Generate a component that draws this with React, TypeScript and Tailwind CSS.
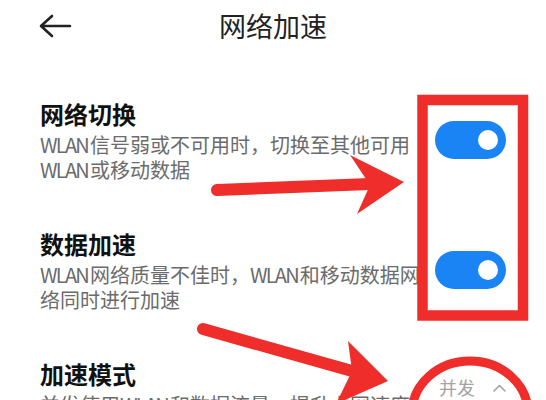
import React from "react";

function Toggle() {
  return (
    <div className="w-[71px] h-[38px] rounded-full bg-[#1a84f4] flex items-center justify-end pr-[8px] shrink-0">
      <div className="w-[20px] h-[20px] rounded-full bg-white" />
    </div>
  );
}

function Line({ text }: { text: string }) {
  const parts = text.split(/(WLAN)/);
  return (
    <div className="whitespace-nowrap">
      {parts.map((p, i) =>
        p === "WLAN" ? (
          <span key={i} className="tracking-[-1.8px] mr-[2px]">
            {p}
          </span>
        ) : (
          <span key={i}>{p}</span>
        )
      )}
    </div>
  );
}

function Item({
  title,
  lines,
  right,
}: {
  title: string;
  lines: string[];
  right: React.ReactNode;
}) {
  return (
    <div className="flex items-center justify-between">
      <div className="flex flex-col">
        <div className="text-[24px] leading-[32px] font-semibold text-[#111111] whitespace-nowrap">{title}</div>
        <div className="mt-[2px] text-[20px] leading-[25px] text-[#6b6b6b]">
          {lines.map((l, i) => (
            <Line key={i} text={l} />
          ))}
        </div>
      </div>
      {right}
    </div>
  );
}

export default function App() {
  return (
    <div className="relative w-[546px] h-[400px] overflow-hidden bg-white font-['Noto_Sans_CJK_SC','Noto_Sans',sans-serif]">
      <header className="h-[52px] relative flex items-center justify-center">
        <svg className="absolute left-[39px] top-[14px]" width="34" height="24" viewBox="0 0 34 24" fill="none">
          <path d="M2 12 H31 M13 2 L2 12 L13 22" stroke="#222" strokeWidth="2.6" strokeLinecap="round" strokeLinejoin="round" />
        </svg>
        <h1 className="text-[27px] leading-[32px] text-[#222222]">网络加速</h1>
      </header>

      <div className="flex flex-col gap-[46px] pt-[46px] pl-[40px] pr-[40px]">
        <Item
          title="网络切换"
          lines={["WLAN信号弱或不可用时，切换至其他可用", "WLAN或移动数据"]}
          right={<Toggle />}
        />
        <Item
          title="数据加速"
          lines={["WLAN网络质量不佳时，WLAN和移动数据网", "络同时进行加速"]}
          right={<Toggle />}
        />
        <Item
          title="加速模式"
          lines={["并发使用WLAN和数据流量，提升上网速度", ""]}
          right={
            <div className="flex items-center gap-[18px] text-[18px] text-[#a3a3a3] shrink-0">
              <span>并发</span>
              <svg width="13" height="8" viewBox="0 0 13 8" fill="none">
                <path d="M1 7 L6.5 1.5 L12 7" stroke="#a3a3a3" strokeWidth="1.6" strokeLinecap="round" strokeLinejoin="round" />
              </svg>
            </div>
          }
        />
      </div>

      <svg className="absolute inset-0 pointer-events-none" width="546" height="400" viewBox="0 0 546 400">
        <rect x="422.5" y="100" width="100.5" height="215.5" fill="none" stroke="#ef2e2b" strokeWidth="10.5" />
        <line x1="217" y1="190" x2="370" y2="184" stroke="#ef2e2b" strokeWidth="12" strokeLinecap="round" />
        <polygon points="350,155 404,182 357,214 370,185" fill="#ef2e2b" />
        <line x1="203" y1="329" x2="352" y2="371" stroke="#ef2e2b" strokeWidth="12" strokeLinecap="round" />
        <polygon points="348,341 388,381 336,404 352,371" fill="#ef2e2b" />
        <ellipse cx="470" cy="413" rx="58" ry="52" fill="none" stroke="#ef2e2b" strokeWidth="9" />
      </svg>
    </div>
  );
}
